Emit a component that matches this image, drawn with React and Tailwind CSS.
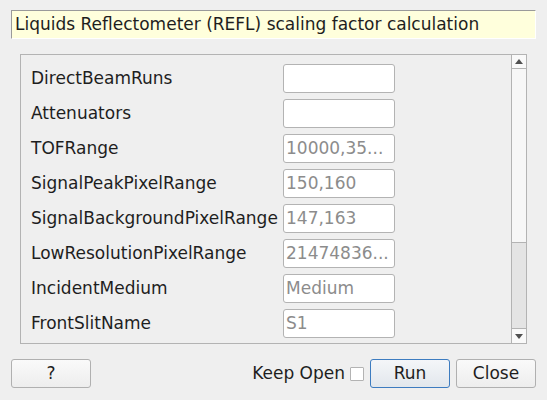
import React from "react";

const rows = [
  { label: "DirectBeamRuns", placeholder: "" },
  { label: "Attenuators", placeholder: "" },
  { label: "TOFRange", placeholder: "10000,35..." },
  { label: "SignalPeakPixelRange", placeholder: "150,160" },
  { label: "SignalBackgroundPixelRange", placeholder: "147,163" },
  { label: "LowResolutionPixelRange", placeholder: "21474836..." },
  { label: "IncidentMedium", placeholder: "Medium" },
  { label: "FrontSlitName", placeholder: "S1" },
];

function Field({ label, placeholder }) {
  return (
    <div className="flex items-center h-[29px]">
      <div className="w-[252px] text-[17px] text-[#1e1e1e] whitespace-nowrap pt-[1px]">{label}</div>
      <div className="w-[112px] h-[29px] bg-white border border-[#b3b3b3] rounded-[3px] flex items-center pl-[2px] pt-[1px] text-[17px] text-[#8c8c8c] whitespace-nowrap overflow-hidden">
        {placeholder}
      </div>
    </div>
  );
}

function ScrollBar() {
  return (
    <div className="w-[15px] border-l border-[#b3b3b3] flex flex-col">
      <div className="h-[14px] border-b border-[#b3b3b3] bg-[#f9f9f9] flex items-center justify-center">
        <svg width="8" height="5" viewBox="0 0 8 5"><path d="M0 5 L4 0 L8 5 Z" fill="#505050" /></svg>
      </div>
      <div className="h-[173px] bg-[#f7f7f7]"></div>
      <div className="flex-1 bg-[#e4e4e4] border-y border-[#b3b3b3]"></div>
      <div className="h-[14px] bg-[#f9f9f9] flex items-center justify-center">
        <svg width="8" height="5" viewBox="0 0 8 5"><path d="M0 0 L8 0 L4 5 Z" fill="#505050" /></svg>
      </div>
    </div>
  );
}

function Button({ children, primary }) {
  const cls = primary
    ? "border-[#3d7cc0] bg-gradient-to-b from-[#f4f6f9] to-[#e2e7ec]"
    : "border-[#b0b0b0] bg-gradient-to-b from-[#fafafa] to-[#ededed]";
  return (
    <button className={"w-[80px] h-[29px] border rounded-[3px] text-[17px] text-[#1e1e1e] " + cls}>
      {children}
    </button>
  );
}

export default function App() {
  return (
    <div className="w-[547px] h-[400px] bg-[#efefef] overflow-hidden" style={{ fontFamily: '"DejaVu Sans", sans-serif' }}>
      <div className="pt-[10px] pl-[11px] pr-[11px]">
        <div className="h-[29px] bg-[#ffffdc] border-t border-l border-[#9a9a9a] border-r-white border-b-white border-r border-b flex items-center pl-[3px] text-[17px] text-[#1e1e1e] whitespace-nowrap">
          Liquids Reflectometer (REFL) scaling factor calculation
        </div>
      </div>

      <div className="ml-[20px] mt-[15px] w-[507px] h-[290px] border border-[#b3b3b3] flex">
        <div className="flex-1 pt-[9px] pl-[10px] flex flex-col gap-[6px]">
          {rows.map((r, i) => (
            <Field key={i} label={r.label} placeholder={r.placeholder} />
          ))}
        </div>
        <ScrollBar />
      </div>

      <div className="mt-[15px] px-[11px] flex items-center">
        <Button>?</Button>
        <div className="flex-1"></div>
        <span className="text-[17px] text-[#1e1e1e] mr-[5px]">Keep Open</span>
        <div className="w-[14px] h-[14px] bg-white border border-[#b3b3b3] rounded-[1px] mr-[6px]"></div>
        <Button primary>Run</Button>
        <div className="w-[6px]"></div>
        <Button>Close</Button>
      </div>
    </div>
  );
}
